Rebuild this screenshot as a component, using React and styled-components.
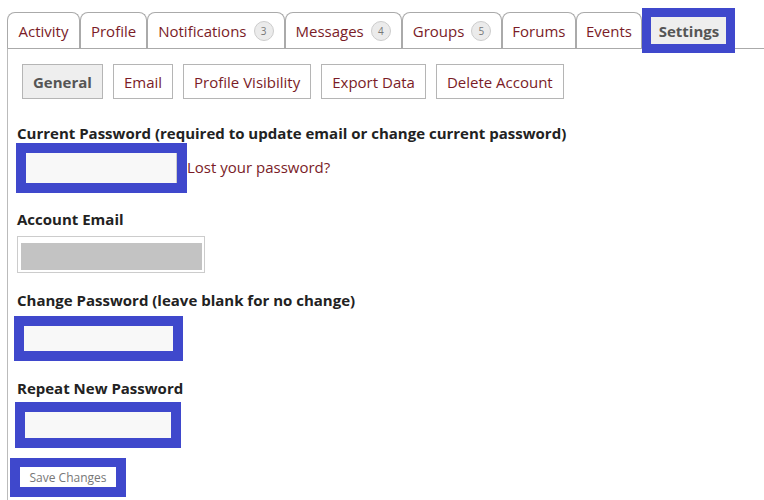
import React from 'react';
import styled, { createGlobalStyle } from 'styled-components';

const GlobalStyle = createGlobalStyle`
  html, body {
    margin: 0;
    padding: 0;
    background: #fff;
    font-family: 'Open Sans', 'Liberation Sans', sans-serif;
  }
`;

const Page = styled.div`
  padding: 12px 0 0 7px;
  height: 488px;
  display: flex;
  flex-direction: column;
  overflow: hidden;
`;

const TabRow = styled.div`
  display: flex;
  align-items: flex-end;
  height: 36px;
`;

const Tab = styled.div`
  display: flex;
  align-items: center;
  gap: 7px;
  box-sizing: border-box;
  height: 36px;
  padding: 0 ${p => p.$pad || 10}px;
  border: 1px solid #aaa;
  border-bottom: none;
  border-radius: 8px 8px 0 0;
  color: #7a1c27;
  font-size: 15px;
`;

// blue highlight frame drawn over the selected tab
const Highlight = styled.div`
  position: relative;
  z-index: 1;
  align-self: flex-start;
  margin: -4px 0 -5px 0;
  border: 9px solid #3f48cc;
  background: #3f48cc;
`;

const ActiveTab = styled.div`
  box-sizing: border-box;
  height: 27px;
  width: 75px;
  display: flex;
  align-items: center;
  justify-content: center;
  background: #eee;
  color: #555;
  font-weight: 700;
  font-size: 15px;
`;

const Badge = styled.span`
  display: inline-flex;
  align-items: center;
  justify-content: center;
  width: 18px;
  height: 18px;
  border-radius: 50%;
  background: #ebebeb;
  border: 1px solid #ccc;
  color: #777;
  font-size: 10px;
`;

const Panel = styled.div`
  flex: 1;
  border-top: 1px solid #aaa;
  border-left: 1px solid #bbb;
  padding: 15px 0 0 9px;
`;

const SubNav = styled.div`
  display: flex;
  gap: 10px;
  margin-left: 5px;
`;

const SubButton = styled.div`
  box-sizing: border-box;
  height: 35px;
  padding: 0 10px;
  display: flex;
  align-items: center;
  border: 1px solid #b5b5b5;
  background: ${p => (p.$active ? '#eee' : '#fff')};
  color: ${p => (p.$active ? '#555' : '#7a1c27')};
  font-weight: ${p => (p.$active ? 700 : 400)};
  font-size: 15px;
`;

const Label = styled.div`
  font-weight: 700;
  font-size: 15px;
  color: #222;
  margin-top: ${p => p.$top}px;
  line-height: 20px;
`;

const FieldRow = styled.div`
  display: flex;
  align-items: center;
  margin-top: ${p => p.$top || 0}px;
  margin-left: ${p => p.$left || 0}px;
`;

const Boxed = styled.div`
  border: 10px solid #3f48cc;
  background: #3f48cc;
`;

const PassInput = styled.div`
  width: ${p => p.$w}px;
  height: ${p => p.$h}px;
  background: #f8f8f8;
  border-right: ${p => (p.$edge ? '1px solid #ccc' : 'none')};
`;

const LostLink = styled.a`
  color: #7a1c27;
  font-size: 15px;
  text-decoration: none;
  margin-top: -2px;
`;

const EmailInput = styled.div`
  box-sizing: border-box;
  width: 188px;
  height: 37px;
  border: 1px solid #ccc;
  padding: 6px 2px 2px 3px;
`;

const EmailFill = styled.div`
  height: 100%;
  background: #c3c3c3;
`;

const SaveButton = styled.div`
  width: 96px;
  height: 20px;
  background: #fff;
  color: #777;
  font-size: 12px;
  display: flex;
  align-items: center;
  justify-content: center;
`;

const SaveBox = styled.div`
  border: 9px solid #3f48cc;
  border-bottom-width: 10px;
  border-left-width: 10px;
  border-right-width: 10px;
  background: #3f48cc;
  width: fit-content;
  margin-top: 10px;
  margin-left: -7px;
`;

function App() {
  const tabs = [
    { name: 'Activity', pad: 10.5 },
    { name: 'Profile', pad: 10 },
    { name: 'Notifications', count: 3, pad: 10 },
    { name: 'Messages', count: 4, pad: 10 },
    { name: 'Groups', count: 5, pad: 10 },
    { name: 'Forums', pad: 9 },
    { name: 'Events', pad: 9.5 },
  ];

  const subNav = ['General', 'Email', 'Profile Visibility', 'Export Data', 'Delete Account'];

  return (
    <>
      <GlobalStyle />
      <Page>
        <TabRow>
          {tabs.map(tab => (
            <Tab key={tab.name} $pad={tab.pad}>
              {tab.name}
              {tab.count && <Badge>{tab.count}</Badge>}
            </Tab>
          ))}
          <Highlight>
            <ActiveTab>Settings</ActiveTab>
          </Highlight>
        </TabRow>
        <Panel>
          <SubNav>
            {subNav.map((item, i) => (
              <SubButton key={item} $active={i === 0}>{item}</SubButton>
            ))}
          </SubNav>

          <Label $top={24}>Current Password (required to update email or change current password)</Label>
          <FieldRow $left={-1}>
            <Boxed>
              <PassInput $w={150} $h={30} $edge />
            </Boxed>
            <LostLink href="#">Lost your password?</LostLink>
          </FieldRow>

          <Label $top={16}>Account Email</Label>
          <FieldRow $top={7}>
            <EmailInput>
              <EmailFill />
            </EmailInput>
          </FieldRow>

          <Label $top={17}>Change Password (leave blank for no change)</Label>
          <FieldRow $top={6} $left={-3}>
            <Boxed>
              <PassInput $w={149} $h={25} />
            </Boxed>
          </FieldRow>

          <Label $top={17}>Repeat New Password</Label>
          <FieldRow $top={4} $left={-2}>
            <Boxed>
              <PassInput $w={146} $h={26} />
            </Boxed>
          </FieldRow>

          <SaveBox>
            <SaveButton>Save Changes</SaveButton>
          </SaveBox>
        </Panel>
      </Page>
    </>
  );
}

export default App;
